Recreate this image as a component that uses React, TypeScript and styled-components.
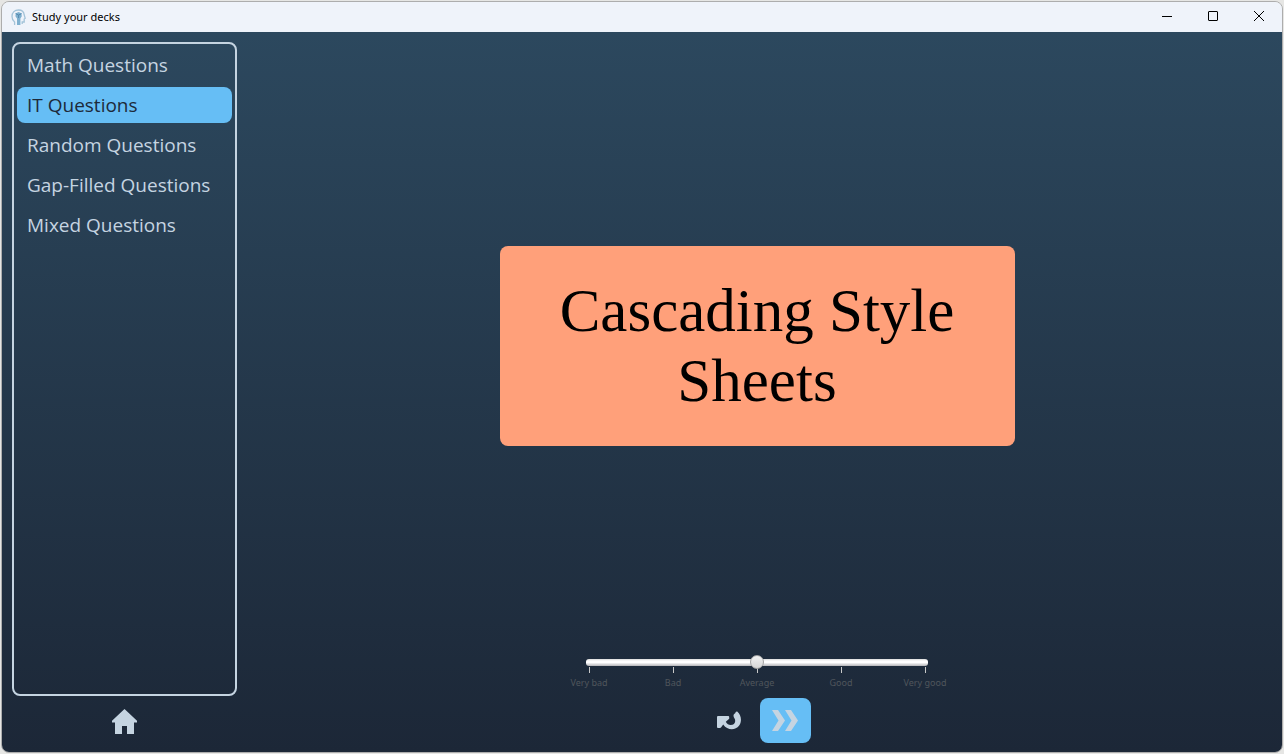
import React, { useState } from "react";
import styled, { createGlobalStyle } from "styled-components";

const GlobalStyle = createGlobalStyle`
  *, *::before, *::after { box-sizing: border-box; }
  body {
    margin: 0;
    background: #e6e6e4;
    font-family: "Open Sans", "Noto Sans", sans-serif;
  }
  button { font: inherit; border: 0; padding: 0; background: none; cursor: pointer; }
`;

const Page = styled.div`
  display: flex;
  min-height: 100vh;
  padding: 1px;
`;

const Window = styled.div`
  flex: 1;
  display: flex;
  flex-direction: column;
  border: 1px solid #adadad;
  border-radius: 8px;
  overflow: hidden;
`;

const TitleBar = styled.header`
  display: flex;
  align-items: center;
  height: 30px;
  padding-left: 9px;
  background: #eff3fa;
  color: #000;
`;

const Title = styled.h1`
  flex: 1;
  margin: 0 0 0 6px;
  font-size: 11px;
  line-height: 16px;
  font-weight: 400;
  font-family: "Noto Sans", sans-serif;
`;

const WindowButton = styled.button`
  display: flex;
  align-items: center;
  justify-content: center;
  width: 46px;
  height: 30px;
`;

const Body = styled.div`
  flex: 1;
  display: flex;
  padding: 10px 5px 9px 10px;
  background: linear-gradient(#2c485e, #1c2737);
`;

const Sidebar = styled.aside`
  display: flex;
  flex-direction: column;
  align-items: center;
  gap: 4px;
  width: 225px;
`;

const DeckList = styled.nav`
  flex: 1;
  align-self: stretch;
  display: flex;
  flex-direction: column;
  gap: 4px;
  padding: 3px;
  border: 2px solid #c5d4e1;
  border-radius: 8px;
`;

const DeckItem = styled.button<{ $selected: boolean }>`
  height: 36px;
  padding: 0 10px;
  border-radius: 8px;
  text-align: left;
  white-space: nowrap;
  font-size: 19px;
  line-height: 36px;
  color: ${(p) => (p.$selected ? "#1d2a3a" : "#c5d4e1")};
  background: ${(p) => (p.$selected ? "#66bef5" : "transparent")};
`;

const IconButton = styled.button<{ $primary?: boolean }>`
  display: flex;
  align-items: center;
  justify-content: center;
  width: 51px;
  height: 45px;
  border-radius: 8px;
  color: #c5d4e1;
  background: ${(p) => (p.$primary ? "#66bef5" : "transparent")};
`;

const HomeButton = styled(IconButton)`
  height: 43px;
`;

const Study = styled.main`
  flex: 1;
  display: flex;
  flex-direction: column;
  align-items: center;
`;

const CardArea = styled.section`
  flex: 1;
  display: flex;
  align-items: center;
  justify-content: center;
`;

const Card = styled.div`
  display: flex;
  align-items: center;
  justify-content: center;
  width: 515px;
  min-height: 200px;
  padding: 0 50px;
  border-radius: 8px;
  background: #ffa07a;
  color: #000;
  text-align: center;
  font-family: "Liberation Serif", serif;
  font-size: 61px;
  line-height: 70px;
`;

const Rating = styled.div`
  display: flex;
  flex-direction: column;
  align-items: center;
  gap: 1px;
  padding: 9px 0;
`;

const Slider = styled.input`
  appearance: none;
  position: relative;
  z-index: 1;
  width: 342px;
  height: 7px;
  margin: 0;
  background: none;

  &::-webkit-slider-runnable-track {
    height: 7px;
    border-radius: 3px;
    background: linear-gradient(#dcdcdc, #fff 30%, #fff 50%, #b4b4b8);
  }

  &::-webkit-slider-thumb {
    appearance: none;
    width: 14px;
    height: 14px;
    margin-top: -4px;
    border: 1px solid #a3a3a3;
    border-radius: 50%;
    background: linear-gradient(#f2f2f2, #d6d6d6);
  }
`;

const Scale = styled.ol`
  display: grid;
  grid-template-columns: repeat(5, 84px);
  margin: 0;
  padding: 0;
  list-style: none;
`;

const ScaleStep = styled.li`
  display: flex;
  flex-direction: column;
  align-items: center;
  gap: 4px;
  font-family: "Noto Sans", sans-serif;
  font-size: 9px;
  line-height: 12px;
  color: #50565c;

  &::before {
    content: "";
    width: 1px;
    height: 6px;
    background: #c8c8c8;
  }
`;

const Actions = styled.div`
  display: flex;
  gap: 5px;
`;

const decks = [
  "Math Questions",
  "IT Questions",
  "Random Questions",
  "Gap-Filled Questions",
  "Mixed Questions",
];

const ratings = ["Very bad", "Bad", "Average", "Good", "Very good"];

const AppIcon = () => (
  <svg width="15" height="17" viewBox="0 0 15 17" fill="none" aria-hidden="true">
    <path
      d="M3.6 16V13C1.6 11.5 1 9.5 1 7.5C1 3.5 3.8 1 7.5 1C11 1 13 3.2 13.2 6L14.2 9.2L13.2 10V13H11.2V15"
      stroke="#a3c3d8"
      strokeWidth="1.3"
    />
    <path d="M7.6 3L10.4 4.2L10.8 7.2L9.4 9.4V16H6V9.4L4.4 7.2L4.8 4.2Z" fill="#7fb0cf" />
    <path d="M4.6 4.6L7.6 6L10.6 4.6M7.6 6V9" stroke="#4f86ac" strokeWidth="0.9" />
  </svg>
);

const HomeIcon = () => (
  <svg width="25" height="25" viewBox="0 0 25 25" fill="currentColor" aria-hidden="true">
    <path d="M12.5 0L25 11.7V13.5H22V25H15V17H10V25H3V13.5H0V11.7Z" />
  </svg>
);

const FlipIcon = () => (
  <svg width="24" height="19" viewBox="0 0 24 19" fill="currentColor" aria-hidden="true">
    <path d="M0 6Q0 5 1 5H11.2Q12.2 5 12.2 6V7.8L8.8 10.8C10 13 11.6 14 13.6 14C17.6 14 19.4 10.4 17.4 7.2Q16 5 16.8 3.4Q17.4 2.6 18.2 2.2Q18.6 .2 20.2 .6C24.4 4.2 25.2 10.4 22 14.8C18.6 19.4 10.6 20 6.2 13.6L4 16.6Q3.6 17 3 17H1Q0 17 0 16Z" />
  </svg>
);

const NextIcon = () => (
  <svg width="26" height="21" viewBox="0 0 26 21" fill="currentColor" aria-hidden="true">
    <path d="M0 0H6L13 10.5L6 21H0L6.5 10.5ZM13 0H19L26 10.5L19 21H13L19.5 10.5Z" />
  </svg>
);

export default function App() {
  const [deck, setDeck] = useState(1);
  const [rating, setRating] = useState(2);

  return (
    <>
      <GlobalStyle />
      <Page>
        <Window>
          <TitleBar>
            <AppIcon />
            <Title>Study your decks</Title>
            <WindowButton aria-label="Minimize">
              <svg width="10" height="12" viewBox="0 0 10 12" stroke="#000">
                <path d="M0 5.5H10" />
              </svg>
            </WindowButton>
            <WindowButton aria-label="Maximize">
              <svg width="10" height="12" viewBox="0 0 10 12" stroke="#000" fill="none">
                <rect x=".5" y=".5" width="9" height="9" rx=".5" />
              </svg>
            </WindowButton>
            <WindowButton aria-label="Close">
              <svg width="10" height="12" viewBox="0 0 10 12" stroke="#000">
                <path d="M0 0L10 10M10 0L0 10" />
              </svg>
            </WindowButton>
          </TitleBar>
          <Body>
            <Sidebar>
              <DeckList aria-label="Decks">
                {decks.map((name, i) => (
                  <DeckItem key={name} $selected={i === deck} onClick={() => setDeck(i)}>
                    {name}
                  </DeckItem>
                ))}
              </DeckList>
              <HomeButton aria-label="Home">
                <HomeIcon />
              </HomeButton>
            </Sidebar>
            <Study>
              <CardArea>
                <Card>Cascading Style Sheets</Card>
              </CardArea>
              <Rating>
                <Slider
                  type="range"
                  min={0}
                  max={4}
                  value={rating}
                  aria-label="Rating"
                  aria-valuetext={ratings[rating]}
                  onChange={(e) => setRating(Number(e.target.value))}
                />
                <Scale>
                  {ratings.map((label) => (
                    <ScaleStep key={label}>{label}</ScaleStep>
                  ))}
                </Scale>
              </Rating>
              <Actions>
                <IconButton aria-label="Flip card">
                  <FlipIcon />
                </IconButton>
                <IconButton $primary aria-label="Next card">
                  <NextIcon />
                </IconButton>
              </Actions>
            </Study>
          </Body>
        </Window>
      </Page>
    </>
  );
}
